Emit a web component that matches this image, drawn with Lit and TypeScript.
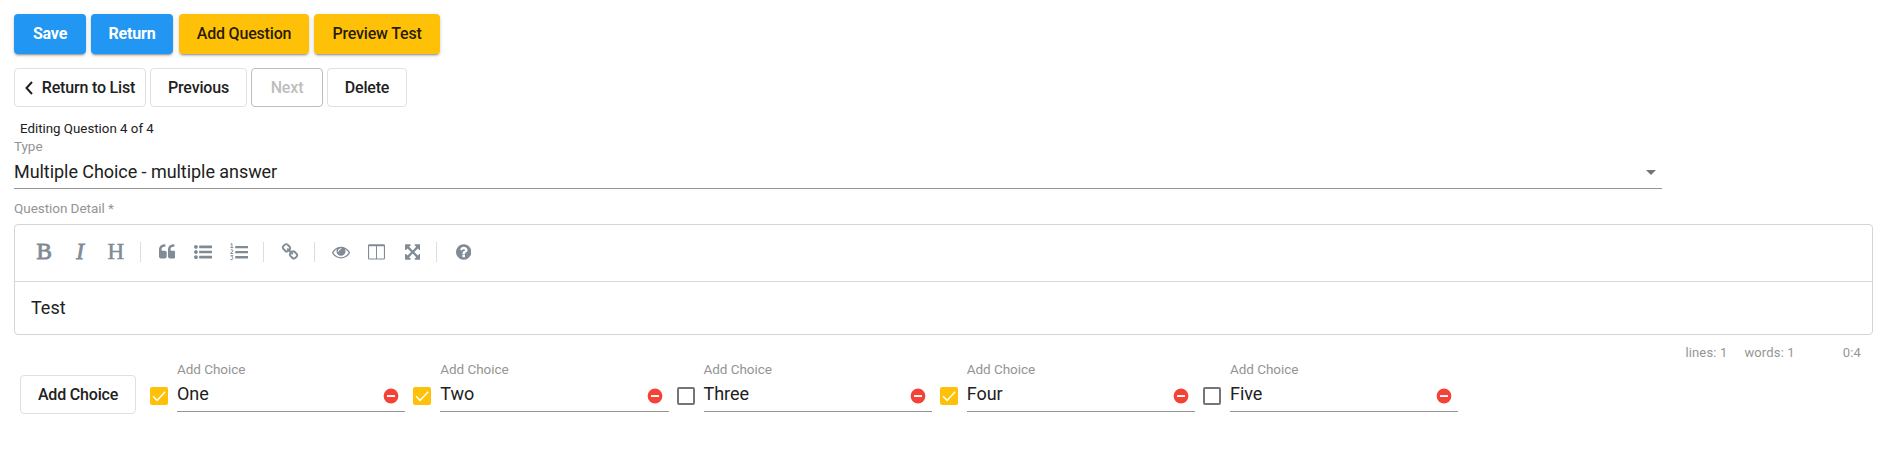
import { LitElement, html, css, svg } from "lit";
import { customElement, property } from "lit/decorators.js";

type Glyph = { viewBox: string; w: number; h: number; body: unknown };

const fa = (width: number, w: number, path: string): Glyph => ({
  viewBox: `0 0 ${width} 1792`, w, h: 18, body: svg`<path d=${path}></path>`,
});

const GLYPHS: Record<string, Glyph> = {
  quote: fa(1664, 16.7, "M768 960v384q0 80-56 136t-136 56h-384q-80 0-136-56t-56-136v-704q0-104 40.500-198.500t109.500-163.500 163.500-109.500 198.500-40.500h64q26 0 45 19t19 45v128q0 26-19 45t-45 19h-64q-106 0-181 75t-75 181v32q0 40 28 68t68 28h224q80 0 136 56t56 136zM1664 960v384q0 80-56 136t-136 56h-384q-80 0-136-56t-56-136v-704q0-104 40.500-198.500t109.500-163.500 163.500-109.500 198.500-40.500h64q26 0 45 19t19 45v128q0 26-19 45t-45 19h-64q-106 0-181 75t-75 181v32q0 40 28 68t68 28h224q80 0 136 56t56 136z"),
  bullets: fa(1792, 18, "M384 1408q0 80-56 136t-136 56-136-56-56-136 56-136 136-56 136 56 56 136zM384 896q0 80-56 136t-136 56-136-56-56-136 56-136 136-56 136 56 56 136zM1792 1312v192q0 13-9.500 22.500t-22.500 9.500h-1216q-13 0-22.500-9.500t-9.500-22.500v-192q0-13 9.500-22.500t22.500-9.500h1216q13 0 22.500 9.500t9.500 22.500zM384 384q0 80-56 136t-136 56-136-56-56-136 56-136 136-56 136 56 56 136zM1792 800v192q0 13-9.500 22.500t-22.500 9.500h-1216q-13 0-22.500-9.500t-9.500-22.500v-192q0-13 9.500-22.500t22.500-9.500h1216q13 0 22.500 9.500t9.500 22.500zM1792 288v192q0 13-9.500 22.500t-22.500 9.500h-1216q-13 0-22.500-9.500t-9.500-22.500v-192q0-13 9.500-22.500t22.500-9.500h1216q13 0 22.500 9.500t9.500 22.500z"),
  numbers: {
    viewBox: "0 0 18 18", w: 18, h: 18,
    body: svg`<path d="M5.200 2.900h12.800v2.400h-12.800zM5.200 7.900h12.800v2.400h-12.800zM5.200 13h12.800v2.400h-12.800z"></path>
      <path d="M.6 1.300 1.900.4V4.600M.4 4.600H3.300M.5 7.400Q1 6.500 1.900 6.600 3 6.800 2.700 7.900 2.300 8.900.6 10.500H3.200M.5 12.600H2.900L1.700 14Q3 14.200 2.900 15.500 2.600 17.200.4 16.600" fill="none" stroke="currentColor" stroke-width=".95"></path>`,
  },
  link: fa(1792, 18, "M1520 1216q0-40-28-68l-208-208q-28-28-68-28-42 0-72 32 3 3 19 18.500t21.500 21.500 15 19 13 25.500 3.500 27.500q0 40-28 68t-68 28q-15 0-27.500-3.500t-25.500-13-19-15-21.500-21.500-18.500-19q-33 31-33 73 0 40 28 68l206 207q27 27 68 27 40 0 68-26l147-146q28-28 28-67zM817 511q0-40-28-68l-206-207q-28-28-68-28-39 0-68 27l-147 146q-28 28-28 67 0 40 28 68l208 208q27 27 68 27 42 0 72-31-3-3-19-18.500t-21.500-21.500-15-19-13-25.500-3.500-27.500q0-40 28-68t68-28q15 0 27.500 3.500t25.500 13 19 15 21.500 21.500 18.500 19q33-31 33-73zM1712 1216q0 120-85 203l-147 146q-83 83-203 83-121 0-204-85l-206-207q-83-83-83-203 0-123 88-209l-88-88q-86 88-208 88-120 0-204-84l-208-208q-84-84-84-204t85-203l147-146q83-83 203-83 121 0 204 85l206 207q83 83 83 203 0 123-88 209l88 88q86-88 208-88 120 0 204 84l208 208q84 84 84 204z"),
  eye: fa(1792, 18, "M1664 960q-152-236-381-353 61 104 61 225 0 185-131.500 316.500t-316.500 131.500-316.500-131.500-131.500-316.500q0-121 61-225-229 117-381 353 133 205 333.500 326.500t434.500 121.500 434.500-121.500 333.500-326.500zM944 576q0-20-14-34t-34-14q-125 0-214.500 89.500t-89.500 214.500q0 20 14 34t34 14 34-14 14-34q0-86 61-147t147-61q20 0 34-14t14-34zM1792 960q0 34-20 69-140 230-376.500 368.500t-499.500 138.500-499.500-139-376.500-368q-20-35-20-69t20-69q140-229 376.500-368t499.500-139 499.500 139 376.500 368q20 35 20 69z"),
  columns: {
    viewBox: "0 0 17 18", w: 17, h: 18,
    body: svg`<path d="M1.200 1.300h14.600q1.200 0 1.200 1.200v12.800q0 1.200-1.200 1.200h-14.600q-1.200 0-1.200-1.200v-12.800q0-1.200 1.200-1.200zM1.100 3.300v12.100h6.900v-12.100zM9 3.300v12.100h6.900v-12.100z" fill-rule="evenodd"></path>`,
  },
  expand: fa(1536, 15.4, "M1283 541l-355 355 355 355 144-144q29-31 70-14 39 17 39 59v448q0 26-19 45t-45 19h-448q-42 0-59-40-17-39 14-69l144-144-355-355-355 355 144 144q31 30 14 69-17 40-59 40h-448q-26 0-45-19t-19-45v-448q0-42 40-59 39-17 69 14l144 144 355-355-355-355-144 144q-19 19-45 19-12 0-24-5-40-17-40-59v-448q0-26 19-45t45-19h448q42 0 59 40 17 39-14 69l-144 144 355 355 355-355-144-144q-31-30-14-69 17-40 59-40h448q26 0 45 19t19 45v448q0 42-39 59-13 5-25 5-26 0-45-19z"),
  help: fa(1536, 15.4, "M896 1376v-192q0-14-9-23t-23-9h-192q-14 0-23 9t-9 23v192q0 14 9 23t23 9h192q14 0 23-9t9-23zM1152 704q0-88-55.500-163t-138.500-116-170-41q-243 0-371 213-15 24 8 42l132 100q7 6 19 6 16 0 25-12 53-68 86-92 34-24 86-24 48 0 85.500 26t37.500 59q0 38-20 61t-68 45q-63 28-115.500 86.500t-52.500 125.500v36q0 14 9 23t23 9h192q14 0 23-9t9-23q0-19 21.500-49.500t54.500-49.500q32-18 49-28.500t46-35 44.500-48 28-60.500 12.500-81zM1536 896q0 209-103 385.500t-279.500 279.500-385.500 103-385.500-103-279.500-279.500-103-385.500 103-385.500 279.500-279.500 385.500-103 385.500 103 279.500 279.500 103 385.500z"),
};

@customElement("tool-icon")
class ToolIcon extends LitElement {
  @property() name = "";
  static styles = css`
    :host { display: flex; width: 30px; height: 30px; margin-right: 5.800px; align-items: center; justify-content: center; color: #808b96; }
    svg { display: block; fill: currentColor; }
    .letter { font: 400 23px/30px "Liberation Serif", serif; -webkit-text-stroke: .5px currentColor; }
    .b { -webkit-text-stroke-width: .9px; }
    .i { font-style: italic; -webkit-text-stroke-width: .8px; }
  `;
  render() {
    if (this.name.length === 1) return html`<span class="letter ${this.name.toLowerCase()}">${this.name}</span>`;
    const g = GLYPHS[this.name];
    return html`<svg width=${g.w} height=${g.h} viewBox=${g.viewBox}>${g.body}</svg>`;
  }
}

@customElement("choice-field")
class ChoiceField extends LitElement {
  @property() value = "";
  @property({ type: Boolean }) checked = false;
  static styles = css`
    :host { display: flex; width: 255.250px; align-items: flex-start; }
    .box { width: 18px; height: 18px; margin-top: 29px; margin-right: 9px; border-radius: 2px; box-sizing: border-box; border: 2px solid #757575; flex: none; }
    .box.on { border: 0; background: #ffc107; }
    svg { display: block; }
    .field { flex: 1; height: 54px; box-sizing: border-box; border-bottom: 1px solid #949494; }
    .label { font-size: 13.500px; letter-spacing: -.05px; line-height: 16px; color: #949494; padding-top: 3px; }
    .line { display: flex; justify-content: space-between; align-items: flex-start; font-size: 18px; line-height: 22px; color: #212121; padding: 6px 6px 0 0; letter-spacing: -.05px; }
    .remove { margin-top: 5px; }
  `;
  render() {
    return html`
      <div class="box ${this.checked ? "on" : ""}">
        ${this.checked ? html`<svg width="18" height="18" viewBox="0 0 18 18"><path d="M3 9.300 7.100 13.400 15.200 4.800" fill="none" stroke="#fff" stroke-width="1.500"></path></svg>` : ""}
      </div>
      <div class="field">
        <div class="label">Add Choice</div>
        <div class="line"><span>${this.value}</span>
          <svg class="remove" width="16" height="16" viewBox="0 0 16 16"><circle cx="8" cy="8" r="7.400" fill="#f44336"></circle><path d="M4 7.100h8v1.900H4z" fill="#fff"></path></svg>
        </div>
      </div>`;
  }
}

@customElement("app-root")
class AppRoot extends LitElement {
  static styles = css`
    :host { display: block; height: 451px; box-sizing: border-box; padding: 14px 10px 0 14px; background: #fff; font-family: Roboto, sans-serif; color: #212121; }
    .row { display: flex; }
    .btn { box-sizing: border-box; height: 39px; border: 1px solid #e0e0e0; border-radius: 4px; background: #fff; color: #212121; font: 500 16px/36px Roboto, sans-serif; letter-spacing: -.18px; padding: 0; display: flex; align-items: center; justify-content: center; white-space: nowrap; }
    .raised { height: 40px; border: 0; box-shadow: 0 3px 1px -2px rgba(0,0,0,.2), 0 2px 2px rgba(0,0,0,.14), 0 1px 5px rgba(0,0,0,.12); }
    .blue { background: #2196f3; color: #fff; font-weight: 700; }
    .amber { background: #ffc107; color: rgba(0,0,0,.87); }
    .save { width: 72px; margin-right: 5px; }
    .return { width: 82px; margin-right: 6px; }
    .addq { width: 130px; margin-right: 5px; }
    .preview { width: 126px; }
    .nav { margin-top: 14px; gap: 4px; }
    .list { width: 132px; gap: 9px; }
    .prev { width: 97px; }
    .next { width: 72px; border-color: #bdbdbd; color: #bdbdbd; }
    .del { width: 80px; }
    .editing { font-size: 13.300px; line-height: 18px; padding: 13px 0 0 6px; }
    .label { font-size: 13.500px; letter-spacing: -.05px; line-height: 16px; color: #949494; }
    .select { width: 1648px; height: 51px; box-sizing: border-box; border-bottom: 1px solid #949494; }
    .value { display: flex; justify-content: space-between; align-items: center; font-size: 18px; line-height: 22px; padding: 7px 6px 0 0; letter-spacing: -.055px; }
    .detail { padding-top: 11px; }
    .editor { margin-top: 8px; height: 111px; box-sizing: border-box; border: 1px solid #d5d5d5; border-radius: 4px; }
    .toolbar { height: 57px; box-sizing: border-box; border-bottom: 1px solid #d9d9d9; display: flex; align-items: center; padding: 0 0 2px 14.200px; }
    .sep { width: 1px; height: 20px; background: #ddd; margin: 0 11.200px 0 3.200px; }
    .content { font-size: 18px; line-height: 22px; padding: 15px 16px; }
    .status { display: flex; justify-content: flex-end; font-size: 13px; line-height: 16px; color: #959694; padding: 10px 12px 0 0; letter-spacing: .15px; }
    .words { margin-left: 17px; }
    .cursor { margin-left: 48px; }
    .choices { margin-top: -3px; padding-left: 6px; gap: 8px; }
    .add { width: 116px; margin: 17px 6px 0 0; }
  `;
  render() {
    const choices: [string, boolean][] = [["One", true], ["Two", true], ["Three", false], ["Four", true], ["Five", false]];
    const tools = ["B", "I", "H", "|", "quote", "bullets", "numbers", "|", "link", "|", "eye", "columns", "expand", "|", "help"];
    return html`
      <div class="row">
        <button class="btn raised blue save">Save</button>
        <button class="btn raised blue return">Return</button>
        <button class="btn raised amber addq">Add Question</button>
        <button class="btn raised amber preview">Preview Test</button>
      </div>
      <div class="row nav">
        <button class="btn list"><svg width="8" height="14" viewBox="0 0 8 14"><path d="M7 1 1.500 7 7 13" fill="none" stroke="#212121" stroke-width="2"></path></svg><span>Return to List</span></button>
        <button class="btn prev">Previous</button>
        <button class="btn next" disabled>Next</button>
        <button class="btn del">Delete</button>
      </div>
      <div class="editing">Editing Question 4 of 4</div>
      <div class="select">
        <div class="label">Type</div>
        <div class="value"><span>Multiple Choice - multiple answer</span>
          <svg width="10" height="5" viewBox="0 0 10 5"><path d="M0 0h10L5 5z" fill="#757575"></path></svg></div>
      </div>
      <div class="label detail">Question Detail *</div>
      <div class="editor">
        <div class="toolbar">${tools.map((t) => (t === "|" ? html`<i class="sep"></i>` : html`<tool-icon name=${t}></tool-icon>`))}</div>
        <div class="content">Test</div>
      </div>
      <div class="status"><span>lines: 1</span><span class="words">words: 1</span><span class="cursor">0:4</span></div>
      <div class="row choices">
        <button class="btn add">Add Choice</button>
        ${choices.map(([v, c]) => html`<choice-field .value=${v} .checked=${c}></choice-field>`)}
      </div>`;
  }
}
